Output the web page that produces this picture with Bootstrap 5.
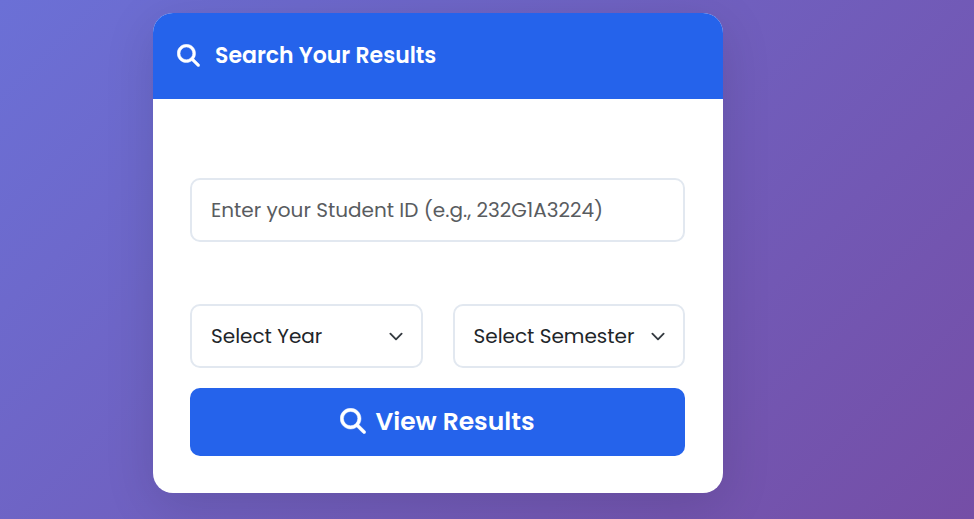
<!DOCTYPE html>
<html lang="en">
<head>
<meta charset="utf-8">
<meta name="viewport" content="width=device-width, initial-scale=1">
<title>Search Your Results</title>
<link href="https://cdn.jsdelivr.net/npm/bootstrap@5.3.0/dist/css/bootstrap.min.css" rel="stylesheet">
<style>
html, body { height: 100%; }
body {
  font-family: Poppins, Inter, sans-serif;
  background: linear-gradient(135deg, #6b70d6 0%, #754ea6 100%) no-repeat;
  padding: 13px 0 0 153px;
}
.result-card { width: 570px; height: 480px; border-radius: 20px; box-shadow: 0 12px 50px rgba(0, 0, 0, .125); }
.result-head { height: 86px; padding: 0 24px; gap: 15px; background: #2563eb; border-radius: 0; }
.result-head h1 { font-size: 22px; line-height: 30px; }
.result-head svg, .view-btn svg { margin-bottom: 2px; stroke: currentColor; stroke-width: 10; }
.result-body { padding: 79px 38px 37px 37px; }
.field { height: 64px; border: 2px solid #e2e8f0; border-radius: 10px; font-size: 20px; padding-left: 19px; color: #212529; }
.field::placeholder { color: #595c5f; opacity: 1; }
.id-field { margin-bottom: 62px; }
.choices { gap: 30px; margin-bottom: 20px; }
.choices .field { background-size: 20px 15px; background-position: right 15px center; padding-right: 45px; }
.view-btn { height: 68px; border-radius: 10px; background: #2563eb; font-size: 25px; gap: 9px; }
</style>
<script src="https://cdn.jsdelivr.net/npm/bootstrap@5.3.0/dist/js/bootstrap.bundle.min.js"></script>
</head>
<body class="overflow-hidden">
<main class="card result-card border-0 overflow-hidden bg-white">
  <header class="card-header result-head d-flex align-items-center border-0 text-white">
    <svg width="23" height="23" viewBox="-5 -5 522 522" fill="currentColor" aria-hidden="true"><path d="M416 208c0 45.900-14.900 88.300-40 122.700L502.600 457.400c12.500 12.500 12.500 32.800 0 45.300s-32.800 12.500-45.300 0L330.700 376c-34.400 25.200-76.800 40-122.700 40C93.100 416 0 322.900 0 208S93.100 0 208 0s208 93.100 208 208zM208 352a144 144 0 1 0 0-288 144 144 0 1 0 0 288z"/></svg>
    <h1 class="fw-semibold m-0 text-nowrap">Search Your Results</h1>
  </header>
  <form class="card-body result-body" onsubmit="return false">
    <input class="form-control field id-field" type="text" aria-label="Student ID" placeholder="Enter your Student ID (e.g., 232G1A3224)">
    <div class="d-flex choices">
      <select class="form-select field flex-fill w-50" aria-label="Year"><option>Select Year</option></select>
      <select class="form-select field flex-fill w-50" aria-label="Semester"><option>Select Semester</option></select>
    </div>
    <button class="btn btn-primary view-btn border-0 w-100 d-flex align-items-center justify-content-center fw-semibold" type="submit">
      <svg width="26" height="26" viewBox="-5 -5 522 522" fill="currentColor" aria-hidden="true"><path d="M416 208c0 45.900-14.900 88.300-40 122.700L502.600 457.400c12.500 12.500 12.500 32.800 0 45.300s-32.800 12.500-45.300 0L330.700 376c-34.400 25.200-76.800 40-122.700 40C93.100 416 0 322.900 0 208S93.100 0 208 0s208 93.100 208 208zM208 352a144 144 0 1 0 0-288 144 144 0 1 0 0 288z"/></svg>
      <span>View Results</span>
    </button>
  </form>
</main>
</body>
</html>
